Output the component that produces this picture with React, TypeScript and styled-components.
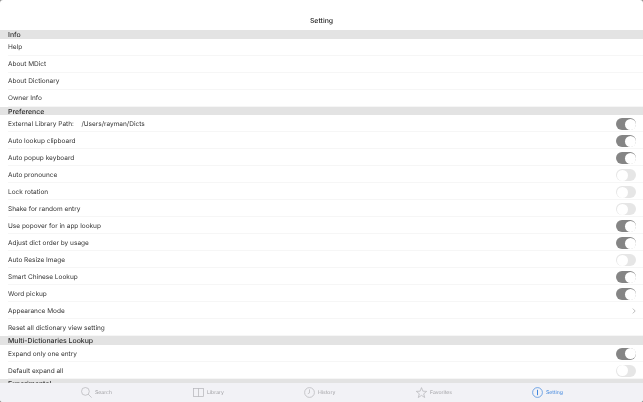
import React from 'react'
import styled, { createGlobalStyle } from 'styled-components'

const GlobalStyle = createGlobalStyle`
  html, body {
    margin: 0;
    padding: 0;
    background: #8c8c8c;
  }
  body {
    font-family: Inter, "Liberation Sans", sans-serif;
    -webkit-font-smoothing: antialiased;
    text-rendering: geometricPrecision;
  }
`

const Screen = styled.div`
  width: 643px;
  height: 402px;
  display: flex;
  flex-direction: column;
  overflow: hidden;
  background: #fff;
  border-radius: 3px;
  filter: blur(0.25px);
`

const NavBar = styled.div`
  height: 30px;
  flex: none;
  display: flex;
  align-items: center;
  justify-content: center;
  padding-top: 11px;
  box-sizing: border-box;
  font-size: 6.9px;
  font-weight: 500;
  color: #222;
`

const List = styled.div`
  flex: 1;
  min-height: 0;
  overflow: hidden;
`

const SectionHeader = styled.div`
  height: 8.6px;
  display: flex;
  align-items: center;
  padding: 0.8px 0 0 8px;
  box-sizing: border-box;
  background: #e3e3e3;
  font-size: 6.9px;
  font-weight: 500;
  color: #2c2c2c;
`

const Row = styled.div`
  height: 17px;
  box-sizing: border-box;
  display: flex;
  align-items: center;
  justify-content: space-between;
  margin-left: 8px;
  padding: 1.8px 7px 0 0;
  border-bottom: 1px solid #f6f6f6;
  font-size: 6.5px;
  color: #343434;
`

const LabelGroup = styled.div`
  display: flex;
  gap: 7.5px;
`

const Track = styled.div<{ $on: boolean }>`
  width: 20px;
  height: 12px;
  border-radius: 6px;
  position: relative;
  background: ${p => (p.$on ? '#858585' : '#e6e6e6')};
`

const Knob = styled.div<{ $on: boolean }>`
  position: absolute;
  top: 0.5px;
  left: ${p => (p.$on ? '8.5px' : '0.5px')};
  width: 11px;
  height: 11px;
  border-radius: 50%;
  background: #fff;
`

const TabBar = styled.div`
  height: 19.4px;
  flex: none;
  background: #f2f2f6;
  box-sizing: border-box;
  padding-left: 81px;
  display: grid;
  grid-template-columns: 112px 111px 112px 116px 100px;
  align-items: center;
`

const Tab = styled.div<{ $active?: boolean }>`
  display: flex;
  align-items: center;
  gap: 3px;
  font-size: 5.1px;
  padding-top: 1px;
  color: ${p => (p.$active ? '#3f86de' : '#a0a0a4')};
  svg {
    flex: none;
    stroke: ${p => (p.$active ? '#3f86de' : '#b4b4b8')};
    fill: none;
    stroke-width: 0.7;
  }
`

const Chevron = () => (
  <svg width="4" height="6" viewBox="0 0 4 6" fill="none" stroke="#b5b5b5" strokeWidth="0.9">
    <path d="M0.8 0.6 L3.2 3 L0.8 5.4" />
  </svg>
)

type Item = { label: string; value?: string; on?: boolean; chevron?: boolean }

const Switch = ({ on }: { on: boolean }) => (
  <Track $on={on}>
    <Knob $on={on} />
  </Track>
)

const Section = ({ title, items }: { title: string; items: Item[] }) => (
  <>
    <SectionHeader>{title}</SectionHeader>
    {items.map(item => (
      <Row key={item.label}>
        <LabelGroup>
          <span>{item.label}</span>
          {item.value && <span>{item.value}</span>}
        </LabelGroup>
        {item.on !== undefined && <Switch on={item.on} />}
        {item.chevron && <Chevron />}
      </Row>
    ))}
  </>
)

const info: Item[] = [
  { label: 'Help' },
  { label: 'About MDict' },
  { label: 'About Dictionary' },
  { label: 'Owner Info' },
]

const preference: Item[] = [
  { label: 'External Library Path:', value: '/Users/rayman/Dicts', on: true },
  { label: 'Auto lookup clipboard', on: true },
  { label: 'Auto popup keyboard', on: true },
  { label: 'Auto pronounce', on: false },
  { label: 'Lock rotation', on: false },
  { label: 'Shake for random entry', on: false },
  { label: 'Use popover for in app lookup', on: true },
  { label: 'Adjust dict order by usage', on: true },
  { label: 'Auto Resize Image', on: false },
  { label: 'Smart Chinese Lookup', on: true },
  { label: 'Word pickup', on: true },
  { label: 'Appearance Mode', chevron: true },
  { label: 'Reset all dictionary view setting' },
]

const multi: Item[] = [
  { label: 'Expand only one entry', on: true },
  { label: 'Default expand all', on: false },
]

export default function App() {
  return (
    <>
      <GlobalStyle />
      <Screen>
        <NavBar>Setting</NavBar>
        <List>
          <Section title="Info" items={info} />
          <Section title="Preference" items={preference} />
          <Section title="Multi-Dictionaries Lookup" items={multi} />
          <Section title="Experimental" items={[]} />
        </List>
        <TabBar>
          <Tab>
            <svg width="11" height="11" viewBox="0 0 11 11">
              <circle cx="4.4" cy="4.4" r="3.9" />
              <path d="M7.2 7.2 L10.6 10.6" />
            </svg>
            Search
          </Tab>
          <Tab>
            <svg width="11" height="9" viewBox="0 0 11 9">
              <rect x="0.4" y="0.4" width="10.2" height="8.2" />
              <path d="M5.5 0.4 V8.6" />
            </svg>
            Library
          </Tab>
          <Tab>
            <svg width="11" height="11" viewBox="0 0 11 11">
              <circle cx="5.5" cy="5.5" r="4.9" />
              <path d="M5.5 2.4 V5.8 L3.8 6.8" />
            </svg>
            History
          </Tab>
          <Tab>
            <svg width="11" height="11" viewBox="0 0 11 11">
              <path d="M5.5 0.6 L6.9 4.2 L10.7 4.4 L7.7 6.8 L8.7 10.5 L5.5 8.4 L2.3 10.5 L3.3 6.8 L0.3 4.4 L4.1 4.2 Z" />
            </svg>
            Favorites
          </Tab>
          <Tab $active>
            <svg width="11" height="11" viewBox="0 0 11 11">
              <circle cx="5.5" cy="5.5" r="4.9" />
              <path d="M5.5 2.8 V8.2" strokeWidth="1" />
            </svg>
            Setting
          </Tab>
        </TabBar>
      </Screen>
    </>
  )
}
